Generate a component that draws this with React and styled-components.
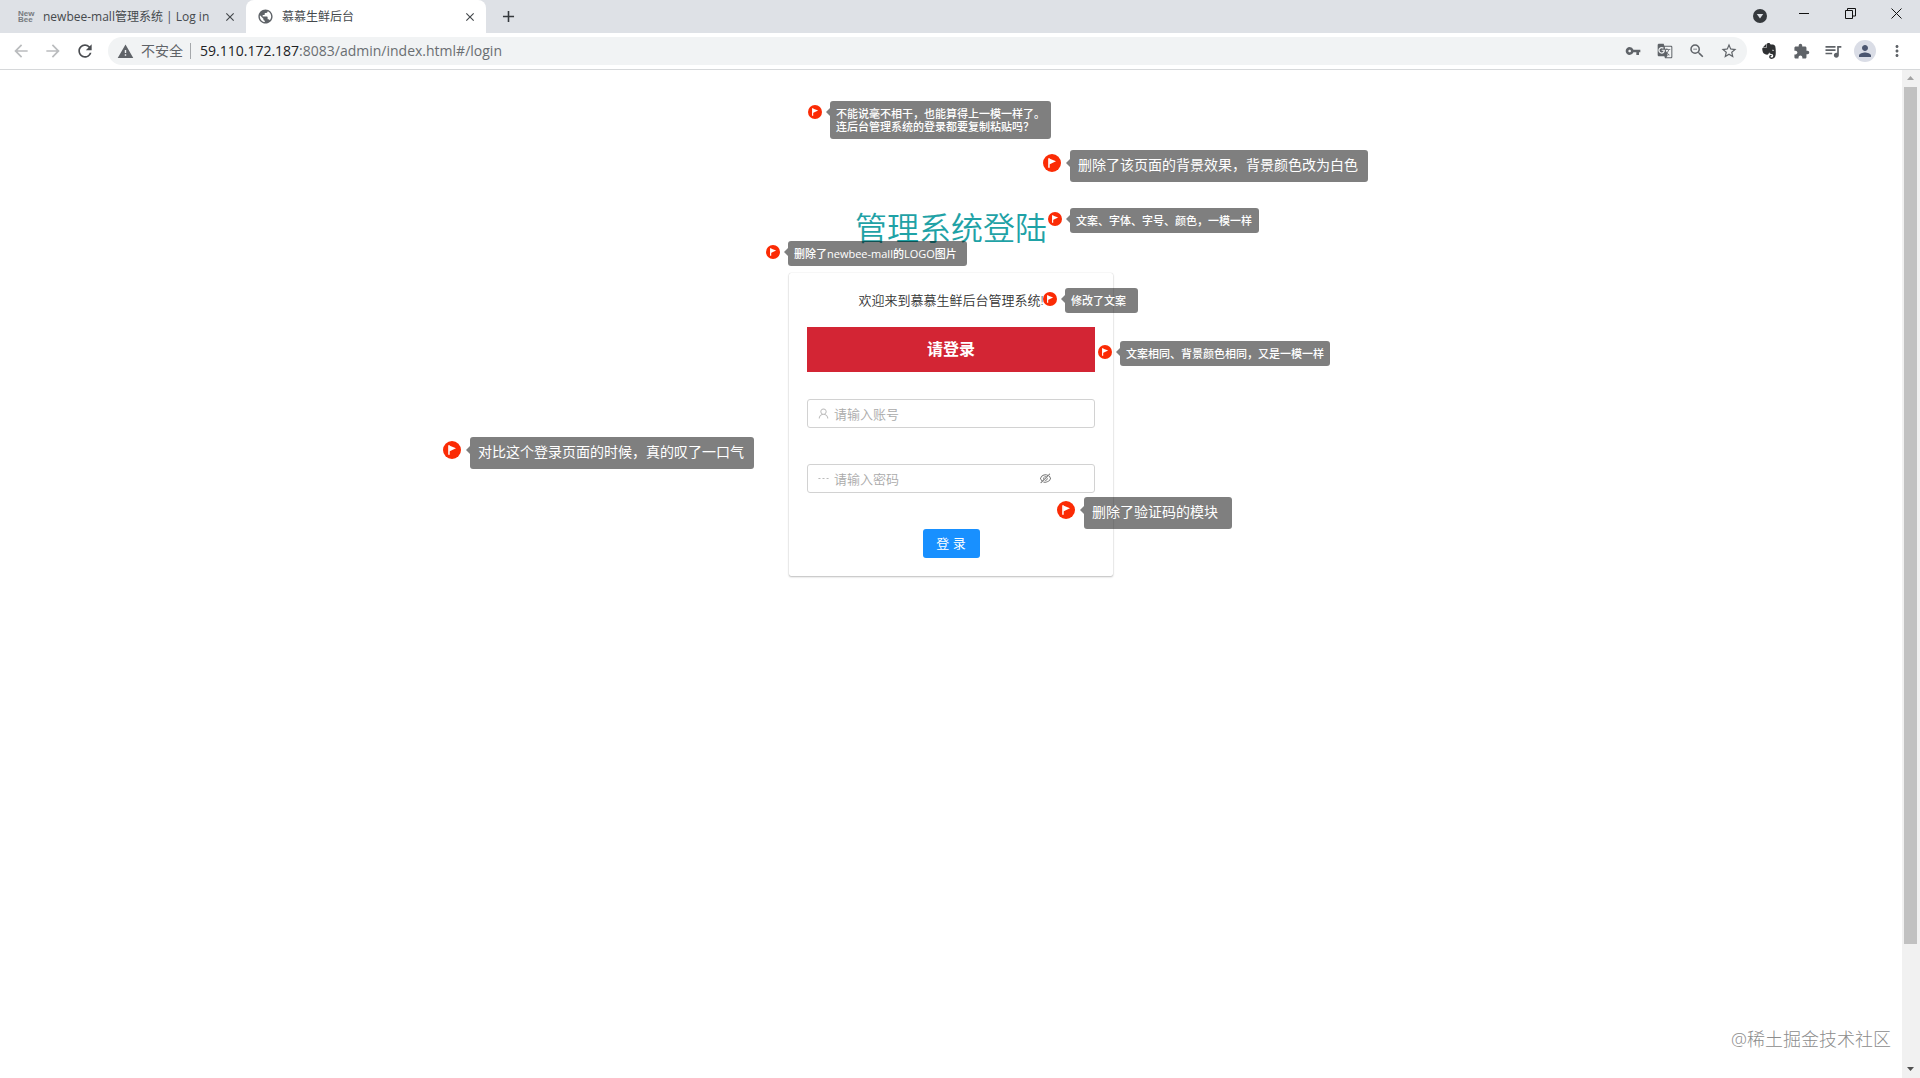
import React from "react";
import styled, { createGlobalStyle } from "styled-components";
import {
  MdAdd,
  MdArrowBack,
  MdArrowForward,
  MdClose,
  MdExtension,
  MdGTranslate,
  MdMoreVert,
  MdPerson,
  MdPublic,
  MdQueueMusic,
  MdRefresh,
  MdStarBorder,
  MdVpnKey,
  MdWarning,
  MdZoomOut,
} from "react-icons/md";
import { SiEvernote } from "react-icons/si";
import { AiOutlineDash, AiOutlineEyeInvisible, AiOutlineUser } from "react-icons/ai";

// x is measured from the middle of the page, y from its top
const notes = [
  { id: 1, x: -143, y: 31, lines: ["不能说毫不相干，也能算得上一模一样了。", "连后台管理系统的登录都要复制粘贴吗？"], width: 221 },
  { id: 2, x: 92, y: 80, lines: ["删除了该页面的背景效果，背景颜色改为白色"], width: 298, large: true },
  { id: 3, x: 97, y: 138, lines: ["文案、字体、字号、颜色，一模一样"], width: 189 },
  { id: 4, x: -185, y: 171, lines: ["删除了newbee-mall的LOGO图片"], width: 179 },
  { id: 5, x: 92, y: 218, lines: ["修改了文案"], width: 73 },
  { id: 6, x: 147, y: 271, lines: ["文案相同、背景颜色相同，又是一模一样"], width: 210 },
  { id: 7, x: -508, y: 367, lines: ["对比这个登录页面的时候，真的叹了一口气"], width: 284, large: true },
  { id: 8, x: 106, y: 427, lines: ["删除了验证码的模块"], width: 148, large: true },
];

function Note({ note }) {
  return (
    <NoteBox $x={note.x} $y={note.y}>
      <Flag viewBox="0 0 18 18" $large={note.large}>
        <circle cx="9" cy="9" r="9" fill="#fb2b05" />
        <path d="M5.2 4.2h1.5v9.6H5.2z" fill="#fff" />
        <path d="M6.2 4.400 13 7.2 6.2 10.400z" fill="#fff" />
      </Flag>
      <Arrow $large={note.large} />
      <Bubble $width={note.width} $large={note.large}>
        {note.lines.map((line) => (
          <NoteLine key={line}>{line}</NoteLine>
        ))}
      </Bubble>
    </NoteBox>
  );
}

function Browser() {
  return (
    <header>
      <TabStrip>
        <Tab $width={246}>
          <NewBeeIcon>
            <span>New</span>
            <span>Bee</span>
          </NewBeeIcon>
          <TabTitle>newbee-mall管理系统 | Log in</TabTitle>
          <IconButton aria-label="关闭标签页" $size={16} $color="#45494d">
            <MdClose size={14} />
          </IconButton>
        </Tab>
        <Tab $width={240} $active>
          <MdPublic size={17} color="#5f6368" />
          <TabTitle>慕慕生鲜后台</TabTitle>
          <IconButton aria-label="关闭标签页" $size={16} $color="#45494d">
            <MdClose size={14} />
          </IconButton>
        </Tab>
        <NewTab aria-label="新标签页">
          <MdAdd size={19} />
        </NewTab>
        <WindowControls>
          <SearchTabs aria-label="搜索标签页">
            <svg width="14" height="14" viewBox="0 0 14 14">
              <circle cx="7" cy="7" r="7" fill="#35393d" />
              <path d="M3.8 5h6.4L7 9.6z" fill="#dee1e6" />
            </svg>
          </SearchTabs>
          <WindowButton aria-label="最小化">
            <svg width="11" height="11" stroke="#111">
              <path d="M0 5.5h10" />
            </svg>
          </WindowButton>
          <WindowButton aria-label="还原">
            <svg width="11" height="11" stroke="#111" fill="none">
              <path d="M.5 2.5h7v8h-7zM2.5 2.5v-2h8v7.5h-3" />
            </svg>
          </WindowButton>
          <WindowButton aria-label="关闭">
            <svg width="11" height="11" stroke="#111">
              <path d="M.5.5l10 10M10.5.5l-10 10" />
            </svg>
          </WindowButton>
        </WindowControls>
      </TabStrip>
      <Toolbar>
        <IconButton aria-label="后退" $size={32} $color="#babcbe">
          <MdArrowBack size={20} />
        </IconButton>
        <IconButton aria-label="前进" $size={32} $color="#babcbe">
          <MdArrowForward size={20} />
        </IconButton>
        <IconButton aria-label="重新加载" $size={32} $color="#4a4d51">
          <MdRefresh size={20} />
        </IconButton>
        <Omnibox>
          <MdWarning size={17} />
          <Insecure>不安全</Insecure>
          <Url>
            <b>59.110.172.187</b>:8083/admin/index.html#/login
          </Url>
          <IconButton aria-label="密码" $size={32}>
            <MdVpnKey size={16} />
          </IconButton>
          <IconButton aria-label="翻译" $size={32}>
            <MdGTranslate size={16} />
          </IconButton>
          <IconButton aria-label="缩放" $size={32}>
            <MdZoomOut size={18} />
          </IconButton>
          <IconButton aria-label="收藏" $size={32}>
            <MdStarBorder size={18} />
          </IconButton>
        </Omnibox>
        <IconButton aria-label="印象笔记" $size={32} $color="#2f3133">
          <SiEvernote size={16} />
        </IconButton>
        <IconButton aria-label="扩展程序" $size={32}>
          <MdExtension size={17} />
        </IconButton>
        <IconButton aria-label="媒体" $size={32}>
          <MdQueueMusic size={20} />
        </IconButton>
        <IconButton aria-label="用户" $size={32} $color="#4b5670">
          <Avatar>
            <MdPerson size={18} />
          </Avatar>
        </IconButton>
        <IconButton aria-label="更多" $size={32}>
          <MdMoreVert size={18} />
        </IconButton>
      </Toolbar>
    </header>
  );
}

export default function App() {
  return (
    <Window>
      <GlobalStyle />
      <Browser />
      <Viewport>
        <Page>
          <Title>管理系统登陆</Title>
          <Card onSubmit={(e) => e.preventDefault()}>
            <Welcome>欢迎来到慕慕生鲜后台管理系统!</Welcome>
            <Banner>请登录</Banner>
            <Field>
              <AiOutlineUser size={13} />
              <Input type="text" placeholder="请输入账号" aria-label="账号" />
            </Field>
            <Field>
              <AiOutlineDash size={13} />
              <Input type="password" placeholder="请输入密码" aria-label="密码" />
              <EyeButton type="button" aria-label="显示密码">
                <AiOutlineEyeInvisible size={13} />
              </EyeButton>
            </Field>
            <Submit type="submit">登 录</Submit>
          </Card>
          {notes.map((note) => (
            <Note key={note.id} note={note} />
          ))}
          <Watermark>@稀土掘金技术社区</Watermark>
        </Page>
        <Scrollbar>
          <ScrollArrow viewBox="0 0 17 17">
            <path d="M5 10h7L8.5 6z" fill="#a3a3a3" />
          </ScrollArrow>
          <Track>
            <Thumb />
          </Track>
          <ScrollArrow viewBox="0 0 17 17">
            <path d="M5 6h7L8.5 10z" fill="#505050" />
          </ScrollArrow>
        </Scrollbar>
      </Viewport>
    </Window>
  );
}

const GlobalStyle = createGlobalStyle`
  * {
    box-sizing: border-box;
  }
  body {
    margin: 0;
    background: #fff;
    font-family: "Open Sans", "Noto Sans CJK SC", sans-serif;
  }
  button, input {
    font-family: inherit;
  }
  svg {
    flex: none;
    display: block;
  }
`;

const Window = styled.div`
  display: flex;
  flex-direction: column;
  min-height: 100vh;
`;
const TabStrip = styled.div`
  display: flex;
  height: 33px;
  padding-right: 1px;
  background: #dee1e6;
`;
const Tab = styled.div`
  display: flex;
  align-items: center;
  gap: 8px;
  width: ${(p) => p.$width}px;
  padding: 0 8px 0 ${(p) => (p.$active ? 11 : 18)}px;
  border-radius: 8px 8px 0 0;
  background: ${(p) => (p.$active ? "#fff" : "transparent")};
  color: #45494d;
`;
const TabTitle = styled.span`
  flex: 1;
  font-size: 12px;
  line-height: 16px;
  white-space: nowrap;
`;
const NewBeeIcon = styled.span`
  display: flex;
  flex-direction: column;
  width: 17px;
  font: bold 8px/6px "Liberation Sans", sans-serif;
  color: #777b80;
`;
const IconButton = styled.button`
  display: flex;
  align-items: center;
  justify-content: center;
  flex: none;
  width: ${(p) => p.$size}px;
  height: ${(p) => Math.min(p.$size, 27)}px;
  padding: 0;
  border: none;
  background: transparent;
  color: ${(p) => p.$color || "#5f6368"};
`;
const NewTab = styled(IconButton)`
  width: 44px;
  height: 33px;
  color: #35393d;
`;
const WindowControls = styled.div`
  display: flex;
  margin-left: auto;
`;
const WindowButton = styled.button`
  display: flex;
  align-items: center;
  justify-content: center;
  width: 46px;
  height: 27px;
  padding: 0;
  border: none;
  background: transparent;
`;
const SearchTabs = styled(WindowButton)`
  width: 42px;
  height: 32px;
`;
const Toolbar = styled.div`
  display: flex;
  align-items: center;
  height: 37px;
  padding: 0 7px 0 5px;
  border-bottom: 1px solid #d6d8da;
`;
const Omnibox = styled.div`
  display: flex;
  align-items: center;
  flex: 1;
  height: 28px;
  margin: 0 6px 0 7px;
  padding: 0 2px 0 9px;
  border-radius: 14px;
  background: #f1f3f4;
  color: #5f6368;
`;
const Insecure = styled.span`
  margin-left: 7px;
  padding-right: 7px;
  border-right: 1px solid #a5a8ab;
  font-size: 14px;
  line-height: 16px;
`;
const Url = styled.span`
  flex: 1;
  padding-left: 9px;
  font-size: 14px;
  line-height: 20px;
  color: #6a6e72;

  b {
    font-weight: normal;
    color: #202124;
  }
`;
const Avatar = styled.span`
  display: flex;
  align-items: center;
  justify-content: center;
  width: 22px;
  height: 22px;
  border-radius: 50%;
  background: #dadde6;
`;

const Viewport = styled.div`
  display: flex;
  flex: 1;
`;
const Page = styled.main`
  position: relative;
  display: flex;
  flex-direction: column;
  align-items: center;
  flex: 1;
  padding-top: 134px;
`;
const Title = styled.h1`
  margin: 0 0 21px;
  font-size: 32px;
  font-weight: 350;
  line-height: 48px;
  color: #1fa2a6;
`;
const Card = styled.form`
  display: flex;
  flex-direction: column;
  width: 324px;
  padding: 18px;
  border-radius: 2px;
  box-shadow: 0 1px 2px rgba(0, 0, 0, 0.25), 0 0 1px rgba(0, 0, 0, 0.2);
`;
const Welcome = styled.p`
  margin: 0 0 18px;
  font-size: 13px;
  font-weight: 350;
  line-height: 18px;
  text-align: center;
  color: #333;
`;
const Banner = styled.h2`
  margin: 0 0 27px;
  background: #d32534;
  font-size: 16px;
  font-weight: bold;
  line-height: 45px;
  text-align: center;
  color: #fff;
`;
const Field = styled.div`
  display: flex;
  align-items: center;
  gap: 4px;
  height: 29px;
  margin-bottom: 36px;
  padding: 0 9px;
  border: 1px solid #d2d2d2;
  border-radius: 3px;
  color: #bbb;
`;
const Input = styled.input`
  flex: 1;
  min-width: 0;
  padding: 0;
  border: none;
  outline: none;
  background: transparent;
  font-size: 13px;
  font-weight: 350;
  line-height: 20px;

  &::placeholder {
    color: #aaa;
  }
`;
const EyeButton = styled.button`
  margin-right: 33px;
  padding: 0;
  border: none;
  background: transparent;
  color: #777;
`;
const Submit = styled.button`
  align-self: center;
  width: 57px;
  height: 29px;
  padding: 0 0 2px;
  border: none;
  border-radius: 3px;
  background: #1890ff;
  font-size: 13px;
  color: #fff;
`;

const NoteBox = styled.div`
  position: absolute;
  left: calc(50% + ${(p) => p.$x}px);
  top: ${(p) => p.$y}px;
  display: flex;
`;
const Flag = styled.svg`
  width: ${(p) => (p.$large ? 18 : 14)}px;
  height: ${(p) => (p.$large ? 18 : 14)}px;
  margin-top: 4px;
`;
const Arrow = styled.span`
  margin: ${(p) => (p.$large ? 9 : 7)}px 0 0 ${(p) => (p.$large ? 5 : 4)}px;
  width: 4px;
  height: 8px;
  border: solid transparent;
  border-width: 4px 4px 4px 0;
  border-right-color: rgba(0, 0, 0, 0.5);
`;
const Bubble = styled.div`
  width: ${(p) => p.$width}px;
  padding: ${(p) => (p.$large ? "6px 8px 8px" : "6px")};
  border-radius: 3px;
  background: rgba(0, 0, 0, 0.5);
  font-size: ${(p) => (p.$large ? 14 : 11)}px;
  font-weight: ${(p) => (p.$large ? 400 : 500)};
  line-height: ${(p) => (p.$large ? 18 : 13)}px;
  color: #fff;
`;
const NoteLine = styled.div`
  white-space: nowrap;
`;
const Watermark = styled.div`
  position: absolute;
  right: 11px;
  bottom: 26px;
  font-size: 18px;
  font-weight: 300;
  line-height: 26px;
  color: #8c8c8c;
`;

const Scrollbar = styled.div`
  display: flex;
  flex-direction: column;
  width: 18px;
  padding-right: 1px;
  background: #f1f1f1;
`;
const ScrollArrow = styled.svg`
  width: 17px;
  height: 17px;
`;
const Track = styled.div`
  flex: 1;
  padding: 0 2px;
`;
const Thumb = styled.div`
  height: 88%;
  background: #c1c1c1;
`;
